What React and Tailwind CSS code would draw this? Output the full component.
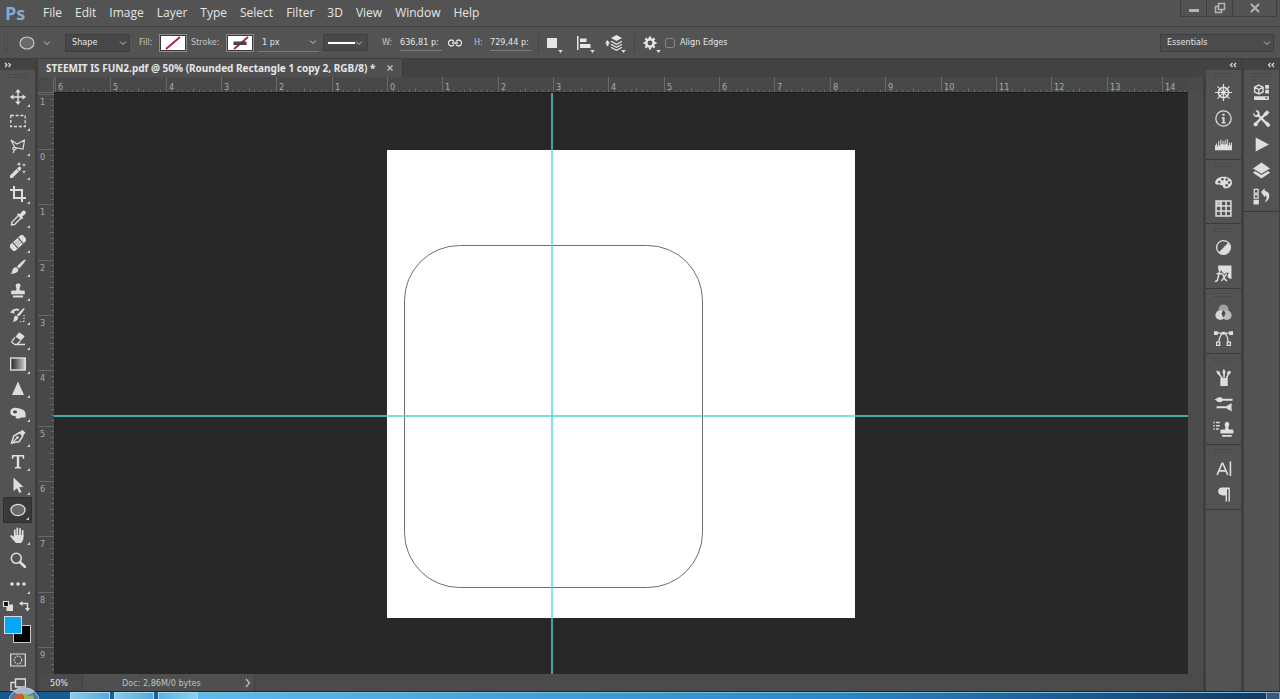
import React from "react";

const MENUS = ["File", "Edit", "Image", "Layer", "Type", "Select", "Filter", "3D", "View", "Window", "Help"];
const UNIT = 55.35;
const ORIGIN_X = 333;
const ORIGIN_Y = 56;

function Icon({ children, className = "h-4 w-4", box = "0 0 16 16" }) {
  return (
    <svg viewBox={box} className={className} fill="none" stroke="currentColor" strokeWidth="1.2" aria-hidden="true">
      {children}
    </svg>
  );
}

const F = { fill: "currentColor", stroke: "none" };

const Stamp = () => (
  <path {...F} d="M5.8 1.8a2.5 2.5 0 0 1 4.6 0c.5 1.4-.6 2.3-.8 3.6-.1 1 .2 1.8.7 2.1h3.2c.8 0 1.3.5 1.3 1.3v2.4H1.2V8.800c0-.8.5-1.300 1.300-1.300h3.200c.5-.3.8-1.100.7-2.100-.2-1.300-1.100-2.200-.6-3.600zM3 12.600h10v1.800H3z" />
);

const TOOLS = [
  ["Move", <g><path d="M8 2v12M2 8h12" strokeWidth="1.4" /><path {...F} d="M8 0l2.800 3.500H5.200zM8 16l2.800-3.500H5.200zM0 8l3.500-2.800v5.600zM16 8l-3.500-2.800v5.600z" /></g>],
  ["Rectangular Marquee", <rect x=".8" y="2.500" width="14.400" height="11" strokeDasharray="3 1.800" strokeWidth="1.300" />],
  ["Polygonal Lasso", <path d="M1 2l6 4 7.500-4-1.500 9-8-1.500zM5 9.500c-2.500-.5-3 2-1 2.200 2 .2 3-1.700 1.600-2M4.500 11.700L3 15" />],
  ["Magic Wand", <g><path d="M1.500 14.500l8-8" strokeWidth="3.300" strokeLinecap="round" /><path d="M6.800 7l2.300 2.300" stroke="#535353" strokeWidth=".8" /><path {...F} d="M9 0l.7 1.600L11.300 2l-1.600.7L9 4.300l-.7-1.600L6.700 2l1.600-.4zM14 1l.6 1.400 1.400.6-1.400.6L14 5l-.6-1.400L12 3l1.400-.6zM14 8l.5 1.200 1.500.5-1.500.6L14 12l-.6-1.700L12 9.700l1.500-.5z" /></g>],
  ["Crop", <path d="M4 0v12h12M0 4h12v12" strokeWidth="2" />],
  ["Eyedropper", <g><path d="M9 5l2.500 2.500-7 7-3 .5.500-3z" strokeWidth="1.400" /><path {...F} d="M7 4.500l1.500-1.300 1.500 1 2-2.700c1.300-1.300 2.600-1 3.300-.3s.7 2.300-.5 3.300L12.200 6.600l.9 1.500-1.300 1.300z" /></g>],
  ["Healing Brush", <g transform="rotate(-42 8 8)"><rect x="-1" y="4" width="18" height="8" rx="2" {...F} /><path d="M4.500 4v8M11.500 4v8" stroke="#535353" /><path d="M6.300 6.500h.8M9 6.500h.8M6.300 9.500h.8M9 9.500h.8M7.700 8h.8" stroke="#535353" strokeWidth="1" /></g>],
  ["Brush", <path {...F} d="M15.500.5c.8.8-3.500 6.500-6.500 9L7 7.500C9 5 14.700-.2 15.500.5zM6.300 8.200l2 2c.2 2.500-2.500 4.800-8.300 4.600 2.300-.8 2-2 2.500-3.800.5-1.800 2-3 3.800-2.800z" />],
  ["Clone Stamp", <Stamp />],
  ["History Brush", <g><path {...F} d="M14.500 1c.7.7-3 6-6 8.500L7 8C9 5.500 13.700.3 14.500 1zM6.200 8.500l1.900 1.800c.2 2.200-1.600 4.500-5.500 4.500 1.400-.8 1-2 1.300-3.500.3-1.400 1-2.600 2.300-2.800zM0 5.500L3.500 2v2.300L5 6.800z" /><path d="M2.500 5C4 2.500 6.500 2 9 3" strokeWidth="1.800" /><path d="M14 8v6.500M10 14.500h4" strokeDasharray="1.200 1.500" /></g>],
  ["Eraser", <g><path {...F} d="M9.500 1.500l4.700 3.300c.4.300.3.700 0 1.100L11 9.500 5.500 5.700l3-3.700c.3-.5.6-.7 1-.5z" /><path d="M5 6.300L2 10.200c-.4.600-.4 1 .1 1.400l2.500 1.700h2.500l3.500-3.500M4 13.500h11" strokeWidth="1.300" /></g>],
  ["Gradient", <g><rect x=".7" y="2" width="14.600" height="12" fill="url(#toolGradient)" strokeWidth="1.400" /></g>],
  ["Sharpen", <path {...F} d="M8 1.500l6 13.500H2z" />],
  ["Burn", <g transform="translate(0 1)"><path {...F} d="M.3 7C.5 3.500 4 2.200 7 3c2 .1 3 .6 5.500 1.500 2.500.8 3.500 3.500 3 8h-4c-2 1.500-5 1-5.500 1L5.500 11C2.500 11.300.2 10 .3 7z" /><ellipse cx="5" cy="7" rx="2" ry="1.400" fill="#484848" stroke="none" /></g>],
  ["Pen", <g transform="translate(0 1)"><path d="M1.500 14L3.800 7 9.500 3.500l3.300 3.300L9.200 12.500z" strokeWidth="1.500" /><path {...F} d="M9.700 3.200L12.300.7l3.200 3.100L13 6.500z" /><path d="M2 14l5-5" /><circle cx="7.500" cy="8.500" r="1.300" {...F} /></g>],
  ["Type", <path {...F} d="M1.800 2h12.400v3.700h-1.300l-.6-2.200H9.200v10.200l2 .5v1.300H4.800v-1.300l2-.5V3.500H3.700l-.6 2.200H1.800z" />],
  ["Path Selection", <path {...F} d="M3.500.5l10 9.500-4.300.3 2.400 4.700-2.300 1-2.200-4.800-3.600 3z" />],
  ["Ellipse", <ellipse cx="8" cy="8" rx="7" ry="5.600" fill="#686868" strokeWidth="1.300" />],
  ["Hand", <g><path d="M4.800 9V3.300M7.300 8V1.300M10 8V1.800M12.600 9V4" strokeWidth="1.800" strokeLinecap="round" /><path {...F} d="M4 8h9.500v2.500c0 2-1 4-2.500 5.500H6C4.500 14.500 2.500 12 .5 9.700c-.9-1.300.7-2 1.700-1.200L4 10z" /></g>],
  ["Zoom", <g><circle cx="6.300" cy="6.300" r="5" strokeWidth="1.600" /><path d="M10 10l5 5" strokeWidth="2.500" strokeLinecap="round" /></g>],
  ["Edit Toolbar", <g {...F}><circle cx="2" cy="8" r="1.800" /><circle cx="8" cy="8" r="1.800" /><circle cx="14" cy="8" r="1.800" /></g>],
];

const DOCK_ONE = [
  [
    ["Navigator", <g><circle cx="8" cy="8" r="4.800" strokeWidth="1.500" /><path d="M8 0v16M0 8h16M2.300 2.300l11.400 11.400M13.700 2.300L2.300 13.700" strokeWidth="1.100" /><circle cx="8" cy="8" r="1.800" {...F} /></g>],
    ["Info", <g><circle cx="8" cy="8" r="7.200" /><path {...F} d="M7 3.500h2v2H7zM6.200 6.800H9v4.700h1v1.200H6.200v-1.200h1V8h-1z" /></g>],
    ["Histogram", <path {...F} d="M0 13.500V9l1-.5V7h1v3l1-1V5h1v4h1V3.500h1v4.500l1-1V4.500h1v3.500h1V5l1-2v5l1-1V3h1v6h1V6h1v3l1-1v-2h1v7.500z" />],
  ],
  [
    ["Color", <g><path {...F} d="M8 2.500c5 0 8 2.300 8 5.700S12.500 14 9.300 13.500c-2.300-.4-.8-2.300-2.800-3C4.500 9.800.3 11 .2 8.300.1 5 3.500 2.500 8 2.500z" /><g fill="#535353" stroke="none"><circle cx="4" cy="7.500" r="1.200" /><circle cx="7" cy="5" r="1.200" /><circle cx="11" cy="5.200" r="1.200" /><circle cx="13.300" cy="8" r="1.200" /><circle cx="11" cy="10.700" r="1.200" /></g></g>],
    ["Swatches", <g><path {...F} fillOpacity=".7" d="M1 1h5v5H1z" /><path d="M1 1h14v14H1zM5.700 1v14M10.400 1v14M1 5.700h14M1 10.400h14" strokeWidth="1.400" /></g>],
  ],
  [
    ["Adjustments", <g><circle cx="8" cy="8" r="6.500" strokeWidth="1.200" /><path {...F} d="M12.600 3.400A6.500 6.500 0 0 1 3.400 12.600z" /></g>],
    ["Styles", <g><path {...F} d="M3 .5H15.500v12.500h-1.700L11.600 11l1.400-3.700h-3L8.600 9 7.700 7H6l1-2H3z" /><path d="M0 15.300c2 .4 2.500-1 3-3.800l1-4.500c.4-2 1.300-2.700 3-2.200M1.500 8.300h5M6.500 8.500c2 0 2 6.500 5 6.300M11.300 8.500c-2 .3-3.200 6-5.500 6.300" strokeWidth="1.400" /></g>],
  ],
  [
    ["Channels", <g stroke="none"><circle cx="8" cy="5" r="4.600" fill="#a0a0a0" /><circle cx="5" cy="10.500" r="4.600" fill="#d6d6d6" /><circle cx="11" cy="10.500" r="4.600" fill="#bcbcbc" /><path fill="#484848" d="M8 5.900a4.600 4.600 0 0 1 1.800 3.600L8 12.500 6.200 9.500A4.600 4.600 0 0 1 8 5.900z" /></g>],
    ["Paths", <g><path d="M2 3h12M3.500 13C3.500 8 5.500 3.500 8 3s4.500 5 4.500 10" /><path {...F} d="M-1 1.200h3.600v3.600H-1zM13.400 1.200H17v3.600h-3.600zM6.700 1.700h2.600v2.600H6.700z" /><path fill="#535353" d="M1.500 11.500h3v3h-3zM11.500 11.500h3v3h-3z" /></g>],
  ],
  [
    ["Brush Presets", <g><path {...F} d="M5 8.500h7V16H5z" /><path d="M7 9L3 3.500M8.500 8V2M10.500 9l2.500-5" strokeWidth="1.500" /><path {...F} d="M1 1.500l3.500 1.200L5 6 2.300 4.700zM7 3.500C7 1.500 8 1 8 0c2 1 2.200 3 1.300 5zM11.500 4c0-2 1.500-2.500 3.300-1.800.4 2-1 3.200-2.500 3.500z" /></g>],
    ["Brush", <g><path d="M6 4.500h10.500M1.500 11.500H11" strokeWidth="1.800" /><path {...F} d="M-.5 4.200c2 0 2.500-2 4.800-2 2 0 2.700.5 3 2.300-.3 1.800-1 2.300-3 2.300-2.300 0-2.800-2-4.800-2.600zM10 11.500c1-2 4-2.700 6-4-.6 1.300-.6 6.700 0 8-2-1.300-5-2-6-4z" /></g>],
    ["Clone Source", <g><g transform="translate(4 .5) scale(.9 1)"><Stamp /></g><path d="M-1.500 1.500h1.300M1 1.500h3.500M-1.500 4.500h1.300M1 4.500h3.500M-1.500 7.500h1.300M1 7.500h2.500" strokeWidth="1.400" /></g>],
  ],
  [
    ["Character", <path d="M2 14L6.700 3h.6L12 14M3.500 10.200h7M14.500 1.500v13.500" strokeWidth="1.500" />],
    ["Paragraph", <path {...F} d="M6.500 1.500H14v13h-1.300v-11.500h-1.400v11.500H10V9C6 9.300 3 8 3 5.200 3 2.800 4.500 1.500 6.500 1.500z" />],
  ],
];

const DOCK_TWO = [
  [
    ["Libraries", <g><path {...F} d="M11.500 1H15v3.500h-3.500zM11.500 5.500H15V9h-3.500zM1 11.500h14V15H1z" /><path d="M5.500 1l4 2v4.500l-4 2-4-2V3zM1.500 3l4 2.200 4-2.200M5.500 5v4.500" strokeWidth="1.300" /><path d="M11.500 13.200h2" stroke="#535353" /></g>],
    ["Tool Presets", <g><path d="M4 4l9.500 9.500M12 3.500L2.500 13" strokeWidth="2.200" /><path {...F} d="M.2 2.500L2.500 5h2V3L2.300.5C4.500-.2 6.300 1 6.300 3.500L6 6 4 6.500C1.500 7 0 5 .2 2.500zM10 5l.2-2 3-2.800 2.300 2.200-2.800 3-2 .4zM11 12.500l2-2 3 3c.5 1.500-1 3-2.500 2.500z" /><circle cx="2.500" cy="13.500" r="2" {...F} /></g>],
    ["Actions", <path {...F} d="M2.500 1.500L15 8 2.500 14.500z" />],
    ["Layers", <g {...F}><path d="M8 .5L16 6l-8 5-8-5z" /><path d="M1.800 8.500L8 12.300l6.200-3.800L16 10l-8 5.500L0 10z" /></g>],
    ["History", <g><path d="M1.200 1.200h3.600v3.600H1.200zM1.200 6.200h3.600v3.400H1.200z" /><path {...F} d="M.5 11h5v4.500h-5zM7.500 3.800L11 .3v2.200c3.200.5 4.600 2.500 4.300 5.500-.3 2.700-1.800 4.500-4.300 5.500 2.200-3 2.500-6.200.2-6.500v2z" /></g>],
  ],
];

function Chevron({ className = "h-2 w-2" }) {
  return (
    <svg viewBox="0 0 8 8" className={className} fill="none" stroke="#c4c4c4" aria-hidden="true">
      <path d="M1 2.500l3 3 3-3" />
    </svg>
  );
}

function Select({ label, value, className }) {
  return (
    <div className={`relative flex items-center ${className}`}>
      <select aria-label={label} className="w-full appearance-none bg-transparent leading-[15px] outline-none" defaultValue={value}>
        <option>{value}</option>
      </select>
      <Chevron className="pointer-events-none absolute right-0.5 h-2 w-2" />
    </div>
  );
}

function Grip() {
  return <div className="mx-auto h-1 w-5 shrink-0 border-y border-dotted border-[#444444]" />;
}

function Divider() {
  return <span className="h-5 w-px shrink-0 bg-[#464646]" />;
}

function Corner() {
  return (
    <svg viewBox="0 0 6 4" className="absolute -right-0.5 bottom-0.5 h-[3px] w-[5px]" aria-hidden="true">
      <path d="M0 0h6L3 4z" fill="#e0e0e0" />
    </svg>
  );
}

function OptionsBar() {
  return (
    <div className="flex h-8 shrink-0 items-center border-b border-[#3c3c3c] pr-1.5 pl-1 font-['DejaVu_Sans_Condensed','Noto_Sans',sans-serif] text-[9px] text-[#e6e6e6]">
      <span className="h-5 w-1 shrink-0 border-x border-dotted border-[#444444]" />
      <button aria-label="Ellipse tool" className="ml-[11px] flex items-center gap-2">
        <Icon className="h-4 w-4"><ellipse cx="8" cy="8" rx="7" ry="6" fill="#6a6a6a" stroke="#c8c8c8" /></Icon>
        <Chevron />
      </button>
      <Select label="Tool mode" value="Shape" className="ml-[14px] h-[18px] w-[65px] border border-[#3d3d3d] bg-[#474747] pl-1.5" />
      <span className="ml-[9px] w-5 text-[#c6c6c6]">Fill:</span>
      <button aria-label="Fill" className="flex h-[18px] w-7 border border-[#8e8e8e] bg-[#383838] p-px">
        <svg viewBox="0 0 24 14" className="h-full w-full bg-white"><path d="M5 13L19 1" stroke="#b01f45" strokeWidth="1.800" /></svg>
      </button>
      <span className="ml-1 w-[35px] text-[#c6c6c6]">Stroke:</span>
      <button aria-label="Stroke" className="flex h-[18px] w-7 border border-[#8e8e8e] bg-[#383838] p-px">
        <svg viewBox="0 0 24 14" className="h-full w-full bg-white"><path d="M6 13L20 1" stroke="#b01f45" strokeWidth="1.800" /><path d="M5.500 5.500h13v3.500h-13z" fill="#44444c" /></svg>
      </button>
      <Select label="Stroke width" value="1 px" className="ml-1 h-[18px] w-[61px] border-b border-[#7a7a7a] pl-1" />
      <button aria-label="Stroke type" className="ml-1 flex h-[17px] w-[45px] items-center justify-between border border-[#3f3f3f] bg-[#494949] px-1">
        <span className="h-0.5 w-[27px] bg-white" />
        <Chevron />
      </button>
      <label className="ml-[14px] flex items-center text-[#c6c6c6]">
        <span className="w-[18px]">W:</span>
        <input defaultValue="636,81 p:" className="h-4 w-[42px] border-b border-[#7a7a7a] bg-transparent text-[#e6e6e6] outline-none" />
      </label>
      <button aria-label="Link width and height" className="ml-1.5">
        <Icon className="h-4 w-3.5" box="0 0 14 16"><path d="M6 6.500a3 3 0 1 0 0 3M8 6.500a3 3 0 1 1 0 3M4 8h6" strokeWidth="1.300" /></Icon>
      </button>
      <label className="ml-3 flex items-center text-[#c6c6c6]">
        <span className="w-4">H:</span>
        <input defaultValue="729,44 p:" className="h-4 w-[42px] border-b border-[#7a7a7a] bg-transparent text-[#e6e6e6] outline-none" />
      </label>
      <span className="ml-1.5 flex"><Divider /></span>
      <button aria-label="Path operations" className="relative ml-1.5 flex h-6 w-4 items-center">
        <Icon className="h-4 w-4"><path {...F} d="M2 3h10v10H2z" /></Icon><Corner />
      </button>
      <button aria-label="Path alignment" className="relative ml-4 flex h-6 w-4 items-center">
        <Icon className="h-4 w-4"><path {...F} d="M0 1h1.500v14H0zM3 3.500h6.500V7H3zM3 9h10.500v4H3z" /></Icon><Corner />
      </button>
      <button aria-label="Path arrangement" className="relative ml-3 flex h-6 w-[19px] items-center">
        <Icon className="h-[18px] w-[19px]" box="0 0 19 18"><path {...F} d="M11.500 1L17 4l-5.500 3L6 4zM2.500 6L5 9.500H3.500V12h-2V9.500H0z" /><path d="M6 7.200l5.500 3L17 7.200M6 10.200l5.500 3 5.500-3M6 13.200l5.500 3 5.500-3" strokeWidth="1.300" /></Icon><Corner />
      </button>
      <span className="ml-2.5 flex"><Divider /></span>
      <button aria-label="Geometry options" className="relative ml-2 flex h-6 w-4 items-center">
        <Icon className="h-4 w-4"><circle cx="7" cy="8" r="3.700" strokeWidth="2.500" /><path d="M7 1.500v2M7 12.500v2M.5 8h2M11.500 8h2M2.400 3.400l1.400 1.400M10.200 11.200l1.400 1.400M11.600 3.400l-1.400 1.400M3.800 11.200l-1.400 1.400" strokeWidth="2.200" /></Icon><Corner />
      </button>
      <label className="ml-1.5 flex items-center gap-[5px]">
        <input type="checkbox" className="h-2.5 w-2.5 appearance-none rounded-xs border border-[#858585]" />
        Align Edges
      </label>
      <Select label="Workspace" value="Essentials" className="ml-auto h-[18px] w-[114px] border border-[#3f3f3f] bg-[#4b4b4b] pl-1.5" />
    </div>
  );
}

function Ruler({ vertical }) {
  const count = vertical ? 11 : 21;
  const first = vertical ? -1 : -6;
  const origin = vertical ? ORIGIN_Y : ORIGIN_X;
  const marks = Array.from({ length: count }, (_, i) => first + i);
  return (
    <svg className={vertical ? "h-full w-4" : "h-full w-full"} aria-hidden="true" shapeRendering="crispEdges">
      {marks.map((m) => {
        const start = Math.round(origin + m * UNIT);
        return (
          <g key={m}>
            {Array.from({ length: 10 }, (_, k) => {
              const p = Math.round(origin + (m + k / 10) * UNIT);
              const len = k === 0 ? 16 : k === 5 ? 5 : 3;
              return vertical ? (
                <path key={k} d={`M${16 - len} ${p + 0.5}h${len}`} stroke="#686868" />
              ) : (
                <path key={k} d={`M${p + 0.5} ${16 - len}v${len}`} stroke="#686868" />
              );
            })}
            <text x={vertical ? 2 : start + 3} y={vertical ? start + 11 : 13} fontSize="9" fill="#a8a8a8">
              {Math.abs(m)}
            </text>
          </g>
        );
      })}
    </svg>
  );
}

function Canvas() {
  return (
    <svg className="h-full w-full bg-[#282828]" role="img" aria-label="Artboard with rounded rectangle and guides">
      <rect x="333" y="57" width="468" height="468" fill="#fff" />
      <rect x="350.500" y="152.500" width="298" height="342" rx="55" fill="none" stroke="#6f6f6f" />
      <path d="M498 0v1200M0 323h2400" stroke="#4fd8d8" strokeWidth="1.400" />
    </svg>
  );
}

function ToolBar() {
  return (
    <aside className="flex w-[38px] shrink-0 flex-col overflow-hidden border-r-[3px] border-[#3f3f3f] bg-[#535353] text-[#dedede]">
      <button aria-label="Expand tools" className="h-[11px] shrink-0 bg-[#434343] pl-1">
        <Icon className="h-2 w-2" box="0 0 8 8"><path d="M1 2l2 2-2 2M4.500 2l2 2-2 2" /></Icon>
      </button>
      <div className="flex h-[15px] shrink-0 items-start pt-1"><Grip /></div>
      <div className="flex h-[511px] shrink-0 flex-col">
        {TOOLS.map(([name, art]) => (
          <button
            key={name}
            aria-label={name}
            className={`relative mx-[3px] flex flex-1 items-center justify-center ${name === "Ellipse" ? "border border-[#303030] bg-[#393939]" : ""}`}
          >
            <Icon>{art}</Icon>
            {name !== "Zoom" && (
              <svg viewBox="0 0 3 3" className="absolute right-0.5 bottom-0.5 h-[3px] w-[3px]"><path d="M3 0v3H0z" fill="#d0d0d0" /></svg>
            )}
          </button>
        ))}
      </div>
      <div className="flex h-5 shrink-0 items-center justify-between pr-1 pl-0.5">
        <button aria-label="Default colors"><Icon className="h-3 w-3" box="0 0 12 12"><path {...F} d="M4.500 4.500H11V11H4.500z" /><path fill="#111" d="M1.500 1.500h5v5h-5z" /></Icon></button>
        <button aria-label="Switch colors"><Icon className="h-3 w-3" box="0 0 12 12"><path d="M2.500 3.500H8.500V9" strokeWidth="1.400" /><path {...F} d="M0 3.500L3.500 1v5zM8.500 11.500L6 8h5z" /></Icon></button>
      </div>
      <div className="grid shrink-0 grid-cols-[9px_9px_9px] grid-rows-[9px_9px_9px] pl-1">
        <button aria-label="Background color" className="col-span-2 col-start-2 row-span-2 row-start-2 border border-[#c8c8c8] bg-black" />
        <button aria-label="Foreground color" className="col-span-2 col-start-1 row-span-2 row-start-1 border border-[#d8d8d8] bg-[#07a6fb]" />
      </div>
      <button aria-label="Quick mask" className="mt-[9px] flex shrink-0 justify-center">
        <Icon><path d="M.7 2h14.600v12H.7z" /><circle cx="8" cy="8" r="3.800" strokeDasharray="1.500 1.200" /></Icon>
      </button>
      <button aria-label="Screen mode" className="mt-2.5 flex shrink-0 justify-center">
        <Icon><path d="M5.500 1h10v8h-10zM5 4.500H1V13h9V9.500" strokeWidth="1.400" /></Icon>
      </button>
    </aside>
  );
}

function Dock({ groups, name, className, late }) {
  return (
    <aside aria-label={name} className={`flex shrink-0 flex-col border-[#3f3f3f] bg-[#535353] text-[#dedede] ${className}`}>
      <button aria-label={`Expand ${name}`} className="flex h-[11px] shrink-0 items-center justify-end bg-[#434343] pr-1">
        <Icon className="h-2 w-2" box="0 0 8 8"><path d="M3.500 2l-2 2 2 2M7 2L5 4l2 2" /></Icon>
      </button>
      {groups.map((group, i) => (
        <div key={i} className={`flex flex-col border-b border-[#3a3a3a] pb-0.5 ${late && i > 1 ? "pt-0.5" : "pt-px"}`}>
          <div className="flex h-2 items-center"><Grip /></div>
          {group.map(([label, art]) => (
            <button key={label} aria-label={label} className="flex h-[26px] items-center justify-center">
              <Icon className="h-[17px] w-[17px] overflow-visible">{art}</Icon>
            </button>
          ))}
        </div>
      ))}
    </aside>
  );
}

function TaskBar() {
  return (
    <footer className="relative flex h-2 shrink-0 gap-1 border-t border-[#12283c] bg-linear-to-r from-[#15588d] via-[#2c80c0] to-[#163e6c] pl-[70px] text-white">
      <div className="absolute -top-[5px] left-2 h-3 w-8 overflow-hidden">
        <svg viewBox="0 0 32 12" className="h-3 w-8" aria-hidden="true">
          <circle cx="16" cy="16" r="15.500" fill="#54799b" stroke="#a8bdcc" />
          <ellipse cx="16" cy="4.500" rx="10" ry="3.500" fill="#d9e4ec" fillOpacity=".6" />
          <path d="M6 12c1-4 4-6 9-5v5z" fill="#d85a2c" />
          <path d="M16 7c3 2 6 2 9 1l1 4H16z" fill="#8fba4b" />
        </svg>
      </div>
      <button aria-label="Task 1" className="w-10 border border-b-0 border-[#a8dcf4] bg-linear-to-r from-[#8cc8ea] to-[#58a9d8]" />
      <button aria-label="Task 2" className="w-10 border border-b-0 border-[#a8dcf4] bg-linear-to-r from-[#8cc8ea] to-[#58a9d8]" />
      <button aria-label="Task 3" className="w-10 border border-b-0 border-[#a8dcf4] bg-linear-to-r from-[#58b4e0] to-[#8cd0f0]" />
      <div className="-ml-1 flex-1 border-t border-[#7fc0e4] bg-linear-to-r from-[#5bbcec] via-[#2b86c8] via-60% to-[#133862]" />
      <button aria-label="Show desktop" className="-ml-1 w-3.5 border border-b-0 border-[#8fa9c4] bg-[#3c5878]" />
    </footer>
  );
}

export default function App() {
  return (
    <div className="flex h-screen w-full flex-col overflow-hidden bg-[#535353] font-['Noto_Sans','Open_Sans',sans-serif] text-[#e6e6e6]">
      <svg className="absolute h-0 w-0" aria-hidden="true">
        <linearGradient id="toolGradient"><stop stopColor="#222" /><stop offset="1" stopColor="#d0d0d0" /></linearGradient>
      </svg>
      <header className="flex h-[27px] shrink-0 items-start justify-between border-b border-[#3f3f3f] pr-[3px]">
        <div className="flex h-[26px] items-center">
          <span className="w-[43px] pl-[5px] font-['Open_Sans',sans-serif] text-lg leading-6 font-bold text-[#81abd2]">Ps</span>
          <nav className="flex gap-[13px] font-['Open_Sans',sans-serif] text-[12px] leading-6">
            {MENUS.map((m) => <button key={m}>{m}</button>)}
          </nav>
        </div>
        <div className="flex h-[17px] divide-x divide-[#404040] border border-t-0 border-[#404040] text-[#b4b4b4]">
          <button aria-label="Minimize" className="flex w-[26px] items-center justify-center"><Icon className="h-3 w-3" box="0 0 12 12"><path {...F} d="M1 7h10v3H1z" /></Icon></button>
          <button aria-label="Restore" className="flex w-[26px] items-center justify-center"><Icon className="h-3 w-3" box="0 0 12 12"><path d="M4.500 1.500h6v6h-6z" strokeWidth="1.500" /><path d="M4 4.500H1.500v6h6V8" strokeWidth="1.500" /></Icon></button>
          <button aria-label="Close" className="flex w-[43px] items-center justify-center"><Icon className="h-3 w-3" box="0 0 12 12"><path d="M2 2l8 8M10 2l-8 8" strokeWidth="2" /></Icon></button>
        </div>
      </header>
      <OptionsBar />
      <div className="flex min-h-0 flex-1">
        <ToolBar />
        <main className="flex min-w-0 flex-1 flex-col">
          <div className="flex h-[18px] shrink-0 bg-[#424242]">
            <div className="flex items-center gap-2.5 border-r border-[#383838] bg-[#505050] px-2 text-[10px] leading-4 font-bold">
              <h1 className="whitespace-nowrap">STEEMIT IS FUN2.pdf @ 50% (Rounded Rectangle 1 copy 2, RGB/8) *</h1>
              <button aria-label="Close document"><Icon className="h-2 w-2" box="0 0 8 8"><path d="M1.500 1.500l5 5M6.500 1.500l-5 5" stroke="#b8b8b8" strokeWidth="1.500" /></Icon></button>
            </div>
          </div>
          <div className="grid min-h-0 flex-1 grid-cols-[16px_minmax(0,1fr)_18px] grid-rows-[16px_minmax(0,1fr)_17px] font-['DejaVu_Sans_Condensed','Noto_Sans',sans-serif]">
            <div className="border-r border-b border-[#6a6a6a] bg-[#4b4b4b]" />
            <div className="overflow-hidden border-b border-[#1e1e1e] bg-[#484848]"><Ruler /></div>
            <div className="border-r-[3px] border-[#3f3f3f] bg-[#4a4a4a]" />
            <div className="overflow-hidden bg-[#484848]"><Ruler vertical /></div>
            <div className="overflow-hidden"><Canvas /></div>
            <div className="border-r-[3px] border-[#3f3f3f] bg-[#4c4c4c]" />
            <div className="col-span-3 flex items-center border-r-[3px] border-[#3f3f3f] bg-[#4b4b4b] pl-3 text-[9px] leading-4">
              <span className="w-8">50%</span>
              <div className="flex h-full w-[173px] items-center justify-between border-x border-[#404040] bg-[#4f4f4f] pr-0.5 pl-[39px] text-[#c0c0c0]">
                <span>Doc: 2,86M/0 bytes</span>
                <Icon className="h-2.5 w-2" box="0 0 8 10"><path d="M2 1l3.500 4L2 9" /></Icon>
              </div>
            </div>
          </div>
        </main>
        <Dock groups={DOCK_ONE} name="Panels" className="w-[38px] border-r-[3px]" late />
        <Dock groups={DOCK_TWO} name="Workspace panels" className="w-9 border-r" />
      </div>
      <TaskBar />
    </div>
  );
}
